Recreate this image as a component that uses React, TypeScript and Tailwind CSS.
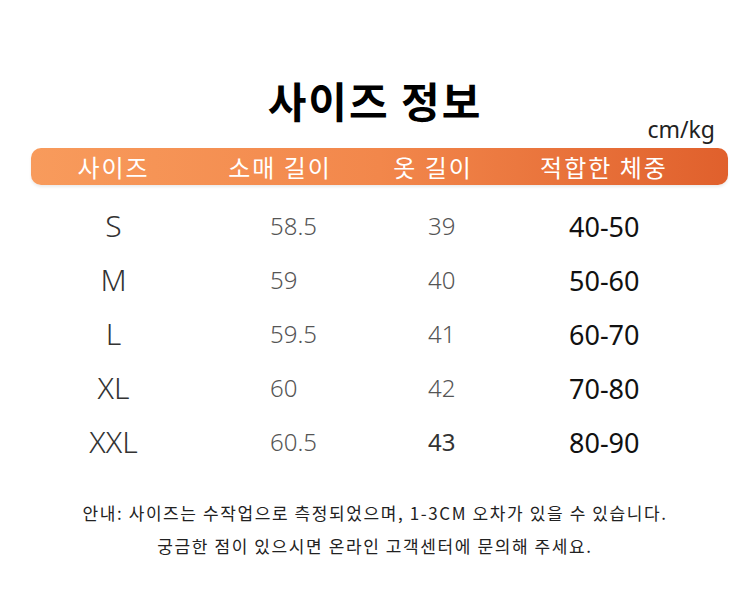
import React from "react";

const rows = [
  { s: "S", a: "58.5", b: "39", c: "40-50" },
  { s: "M", a: "59", b: "40", c: "50-60" },
  { s: "L", a: "59.5", b: "41", c: "60-70" },
  { s: "XL", a: "60", b: "42", c: "70-80" },
  { s: "XXL", a: "60.5", b: "43", c: "80-90" },
];

export default function App() {
  return (
    <div className="w-[750px] h-[590px] bg-white flex flex-col font-['Noto_Sans','Noto_Sans_CJK_KR',sans-serif] text-[#222]">
      <div className="pt-[77px] h-[124px] text-center text-[42px] leading-[46px] font-bold tracking-[2px] text-black font-['Noto_Sans_CJK_KR',sans-serif]">
        사이즈 정보
      </div>
      <div className="flex justify-end pr-[35px] h-[24px] -mt-[7px]">
        <span className="text-[23px] leading-[24px] text-[#222]">cm/kg</span>
      </div>
      <div className="ml-[31px] mr-[22px] mt-[7px] h-[37px] rounded-[10px] bg-linear-to-r from-[#f89b5c] via-[#f2874b] to-[#e0602c] shadow-[0_2px_3px_rgba(0,0,0,0.08)] grid grid-cols-[165px_168px_138px_204px] items-center text-white text-[24px] tracking-[2px] leading-[37px] font-['Noto_Sans_CJK_KR',sans-serif]">
        <div className="text-center">사이즈</div>
        <div className="text-center">소매 길이</div>
        <div className="text-center">옷 길이</div>
        <div className="text-center">적합한 체중</div>
      </div>
      <div className="ml-[31px] mt-[14px] flex flex-col">
        {rows.map((r) => (
          <div key={r.s} className="h-[54px] grid grid-cols-[165px_168px_138px_204px] items-center">
            <div className="text-center text-[30px] font-light text-[#333] leading-none">{r.s}</div>
            <div className="pl-[74px] text-[24px] font-light text-[#555] leading-none">{r.a}</div>
            <div className={"pl-[64px] text-[24px] leading-none " + (r.b === "43" ? "font-normal text-[#333]" : "font-light text-[#555]")}>{r.b}</div>
            <div className="pl-[67px] text-[27px] font-normal text-[#111] leading-none">{r.c}</div>
          </div>
        ))}
      </div>
      <div className="mt-[27px] flex flex-col items-center text-[17px] tracking-[1.6px] leading-[33px] text-[#222] font-['Noto_Sans_CJK_KR',sans-serif]">
        <div>안내: 사이즈는 수작업으로 측정되었으며, 1-3CM 오차가 있을 수 있습니다.</div>
        <div>궁금한 점이 있으시면 온라인 고객센터에 문의해 주세요.</div>
      </div>
    </div>
  );
}
